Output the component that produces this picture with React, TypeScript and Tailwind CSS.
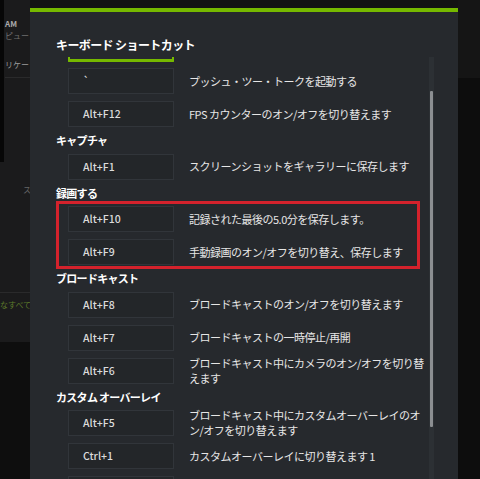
import React from "react";

type Row = [string, string];
type Section = { header?: string; rows: Row[]; highlight?: boolean };

const sections: Section[] = [
  {
    rows: [
      ["`", "プッシュ・ツー・トークを起動する"],
      ["Alt+F12", "FPS カウンターのオン/オフを切り替えます"],
    ],
  },
  {
    header: "キャプチャ",
    rows: [["Alt+F1", "スクリーンショットをギャラリーに保存します"]],
  },
  {
    header: "録画する",
    highlight: true,
    rows: [
      ["Alt+F10", "記録された最後の5.0分を保存します。"],
      ["Alt+F9", "手動録画のオン/オフを切り替え、保存します"],
    ],
  },
  {
    header: "ブロードキャスト",
    rows: [
      ["Alt+F8", "ブロードキャストのオン/オフを切り替えます"],
      ["Alt+F7", "ブロードキャストの一時停止/再開"],
      ["Alt+F6", "ブロードキャスト中にカメラのオン/オフを切り替えます"],
    ],
  },
  {
    header: "カスタム オーバーレイ",
    rows: [
      ["Alt+F5", "ブロードキャスト中にカスタムオーバーレイのオン/オフを切り替えます"],
      ["Ctrl+1", "カスタムオーバーレイに切り替えます 1"],
      ["Ctrl+2", "カスタムオーバーレイに切り替えます 2"],
    ],
  },
];

function ShortcutRow({ k, d }: { k: string; d: string }) {
  return (
    <div className="flex h-[33px] shrink-0 items-center">
      <div className="ml-[12px] flex h-[26px] w-[106px] shrink-0 items-center border border-[#31353a] bg-[#232629] pl-[14px] text-[10.5px] font-medium text-[#dcdcdc]">
        {k}
      </div>
      <div className="ml-[15px] w-[240px] shrink-0 text-[11px] leading-[15px] tracking-[-0.5px] text-[#e6e6e6]">
        {d}
      </div>
    </div>
  );
}

export default function App() {
  return (
    <div className="flex h-[479px] w-[480px] overflow-hidden bg-[#0e0e0e] font-['Noto_Sans_CJK_JP','Noto_Sans',sans-serif]">
      {/* left background app */}
      <div className="flex w-[30px] shrink-0 flex-col overflow-hidden">
        <div className="flex h-[342px] flex-col bg-[#1b1b1c]">
          <div className="flex h-[162px]">
            <div className="w-[4px] shrink-0 bg-[#070707]" />
            <div className="flex flex-1 flex-col overflow-hidden whitespace-nowrap pl-[1px] text-[8px]">
              <div className="mt-[18px] h-[11px] font-bold leading-[11px] text-[#a9a9a9]">AM</div>
              <div className="mt-[1px] h-[11px] leading-[11px] text-[#6f6f6f]">ピュー</div>
              <div className="mt-[18px] h-[11px] leading-[11px] text-[#9a9a9a]">リケー</div>
              <div className="mt-[7px] h-px bg-[#2a2a2b]" />
            </div>
          </div>
          <div className="mt-[22px] h-[11px] overflow-hidden whitespace-nowrap pl-[23px] text-[8px] leading-[11px] text-[#666]">
            ス
          </div>
          <div className="mt-[97px] h-px bg-[#2a2a2b]" />
          <div className="mt-[6px] h-[11px] overflow-hidden whitespace-nowrap text-[8px] leading-[11px] text-[#5c7a2a]">
            なすべての
          </div>
        </div>
        <div className="flex-1 bg-[#0e0e0e]" />
      </div>

      {/* modal column */}
      <div className="flex w-[428px] shrink-0 flex-col bg-[#131313] pt-[8px]">
        <div className="flex h-[471px] flex-col overflow-hidden border-t-[4px] border-[#76b900] bg-[#26292d]">
          <div className="pl-[26px] pt-[24px]">
            <div className="h-[18px] text-[12px] font-bold leading-[18px] tracking-[-0.6px] text-white">
              キーボード ショートカット
            </div>
          </div>
          <div className="mt-[3px] flex pl-[26px]">
            <div className="flex w-[373px] shrink-0 flex-col">
              <div className="ml-[12px] h-[5px] w-[106px] rounded-b-[1px] border-x-[2px] border-b-[3px] border-[#76b900]" />
              <div className="mt-[2.5px] flex flex-col">
                {sections.map((s, i) => {
                  const rows = s.rows.map((r, j) => <ShortcutRow key={j} k={r[0]} d={r[1]} />);
                  return (
                    <React.Fragment key={i}>
                      {s.header && (
                        <div className="flex h-[19.5px] shrink-0 items-center text-[11px] font-bold tracking-[-0.7px] text-white">
                          {s.header}
                        </div>
                      )}
                      {s.highlight ? (
                        <div className="relative flex flex-col">
                          {rows}
                          <div className="pointer-events-none absolute bottom-0 left-0 right-[9px] top-[-2px] border-[3px] border-[#d4222c]" />
                        </div>
                      ) : (
                        rows
                      )}
                    </React.Fragment>
                  );
                })}
              </div>
            </div>
            <div className="flex h-[430px] w-[5px] shrink-0 flex-col bg-[#2c3034] px-[1px]">
              <div className="mt-[34px] h-[336px] rounded-[1px] bg-[#8b8e91]" />
            </div>
          </div>
        </div>
      </div>

      {/* right background */}
      <div className="flex flex-1 flex-col">
        <div className="h-[78px] bg-[#151515]" />
        <div className="flex-1 bg-[#0d0d0d]" />
      </div>
    </div>
  );
}
